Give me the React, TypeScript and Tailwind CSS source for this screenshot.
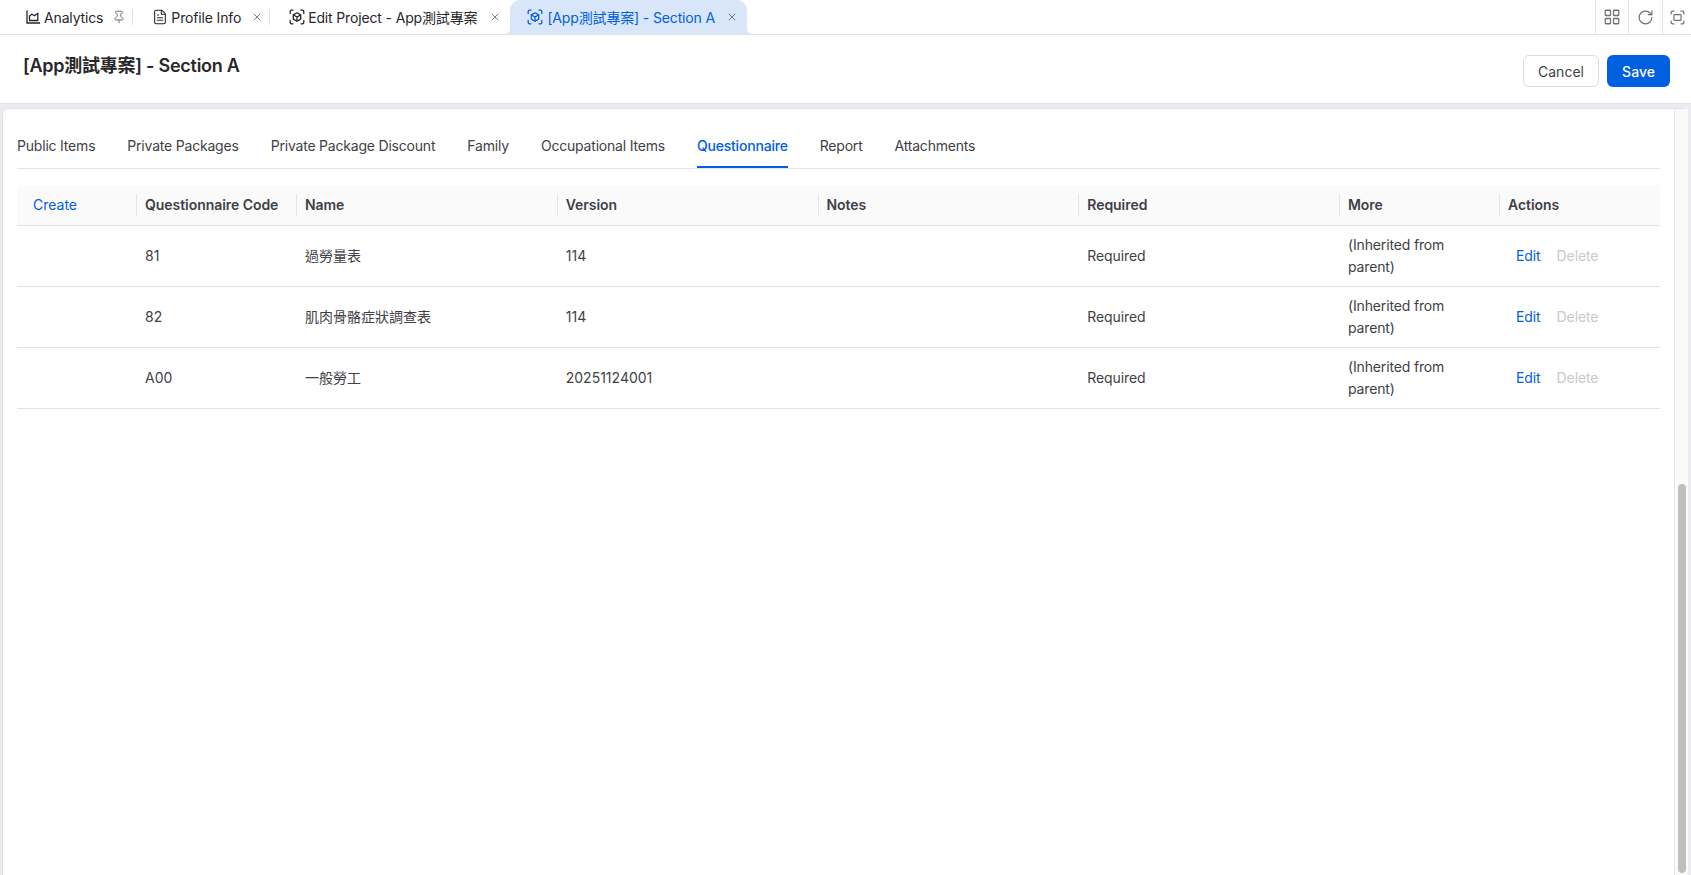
import { FileText, Fullscreen, LayoutGrid, Pin, RotateCw, X } from "lucide-react";

const sections = [
  "Public Items",
  "Private Packages",
  "Private Package Discount",
  "Family",
  "Occupational Items",
  "Questionnaire",
  "Report",
  "Attachments",
];

const rows = [
  { code: "81", name: "過勞量表", version: "114" },
  { code: "82", name: "肌肉骨骼症狀調查表", version: "114" },
  { code: "A00", name: "一般勞工", version: "20251124001" },
];

const ChartIcon = () => (
  <svg width="16" height="16" viewBox="0 0 16 16" fill="none" stroke="currentColor" strokeWidth="1.3" className="mr-[3px]">
    <path d="M2 1.5V14H15" />
    <path d="M4.5 11.5V7L7 5.2L9.5 6.8L12.8 4.2V11.5Z" strokeLinejoin="round" />
  </svg>
);

const ProjectIcon = ({ className }: { className: string }) => (
  <svg width="16" height="16" viewBox="0 0 16 16" fill="none" stroke="currentColor" strokeWidth="1.3" strokeLinecap="round" strokeLinejoin="round" className={className}>
    <path d="M1.2 4.5V2.6C1.2 1.8 1.8 1.2 2.6 1.2H4" />
    <path d="M12 1.2H13.4C14.2 1.2 14.8 1.8 14.8 2.6V4.5" />
    <path d="M14.8 11.5V13.4C14.8 14.2 14.2 14.8 13.4 14.8H12" />
    <path d="M4 14.8H2.6C1.8 14.8 1.2 14.2 1.2 13.4V11.5" />
    <path d="M8 3.8L11.7 5.9V10.1L8 12.2L4.3 10.1V5.9Z" />
    <path d="M4.5 6L8 8L11.5 6M8 8V12" />
  </svg>
);

const HeadCell = ({ label }: { label: string }) => (
  <th className="relative px-2 py-[9px] text-left text-[14px] leading-[22px] font-semibold tracking-[-0.05px] text-[#3f3f46]">
    <span className="absolute left-[-1px] top-[9px] h-[22px] w-px bg-[#e5e5e5]" />
    {label}
  </th>
);

const App = () => {
  return (
    <div className="flex h-[875px] w-full flex-col overflow-hidden bg-[#ebebf2] font-['Inter','Noto_Sans_CJK_TC',sans-serif] text-[14px] text-[#3f3f46]">
      {/* tabs */}
      <div className="flex h-[35px] shrink-0 items-stretch border-b border-[#e2e2e6] bg-white pl-[25px] tracking-[-0.15px] text-[#27272a]">
        <div className="flex items-center">
          <ChartIcon />
          <span>Analytics</span>
          <Pin size={14} strokeWidth={1.7} className="ml-[9px] text-[#71717a]" />
          <span className="ml-[6px] h-4 w-px bg-[#e2e2e6]" />
        </div>
        <div className="ml-[19px] flex items-center">
          <FileText size={16} strokeWidth={1.6} className="mr-[3px]" />
          <span>Profile Info</span>
          <X size={12} strokeWidth={1.5} className="ml-[10px] text-[#52525b]" />
          <span className="ml-[6px] h-4 w-px bg-[#e2e2e6]" />
        </div>
        <div className="ml-[19px] flex items-center">
          <ProjectIcon className="mr-[3px]" />
          <span>Edit Project - App測試專案</span>
          <X size={12} strokeWidth={1.5} className="ml-[12px] text-[#52525b]" />
        </div>
        <div className="relative ml-[9px] flex w-[237px] items-center rounded-t-[10px] bg-[#d9e6f9] pl-[17px] text-[#0060df]">
          <span className="absolute bottom-0 left-[-5px] size-[5px] bg-[#d9e6f9]">
            <span className="block size-full rounded-br-[5px] bg-white" />
          </span>
          <span className="absolute bottom-0 right-[-5px] size-[5px] bg-[#d9e6f9]">
            <span className="block size-full rounded-bl-[5px] bg-white" />
          </span>
          <ProjectIcon className="mr-1" />
          <span>[App測試專案] - Section A</span>
          <X size={12} strokeWidth={1.5} className="ml-[11px] text-[#52525b]" />
        </div>
        <div className="ml-auto flex items-stretch text-[#71717a]">
          <div className="flex w-[33px] items-center justify-center border-l border-[#e2e2e6]">
            <LayoutGrid size={18} strokeWidth={1.7} />
          </div>
          <div className="flex w-[34px] items-center justify-center border-l border-[#e2e2e6]">
            <RotateCw size={17} strokeWidth={1.7} />
          </div>
          <div className="flex w-[29px] items-center justify-center border-l border-[#e2e2e6]">
            <Fullscreen size={17} strokeWidth={1.7} />
          </div>
        </div>
      </div>

      {/* title bar */}
      <div className="flex h-[69px] shrink-0 items-start justify-between border-b border-[#e2e2e6] bg-white pl-[23px] pr-[21px]">
        <h1 className="mt-[19px] text-[18px] leading-6 font-semibold tracking-[-0.25px] text-[#27272a]">
          [App測試專案] - Section A
        </h1>
        <div className="mt-5 flex gap-2">
          <button className="h-8 w-[76px] rounded-md border border-[#dcdcdc] bg-white text-[#3f3f46]">
            Cancel
          </button>
          <button className="h-8 w-[63px] rounded-md bg-[#0060df] font-medium text-white">
            Save
          </button>
        </div>
      </div>

      {/* content */}
      <div className="mt-1 mr-[3px] ml-[2px] flex min-h-0 flex-1 rounded-t-md border-t border-l border-[#e2e2e6] bg-white">
        <div className="min-w-0 flex-1 pl-[14px] pr-[14px]">
          <div className="flex h-[60px] items-end gap-8 border-b border-[#e5e5e5] tracking-[-0.2px]">
            {sections.map((s) =>
              s === "Questionnaire" ? (
                <div
                  key={s}
                  className="h-[38px] border-b-2 border-[#0060df] font-medium text-[#0060df] leading-[32px]"
                >
                  {s}
                </div>
              ) : (
                <div key={s} className="h-[38px] leading-[32px] text-[#3f3f46]">
                  {s}
                </div>
              ),
            )}
          </div>

          <table className="mt-4 w-full table-fixed border-collapse">
            <colgroup>
              <col className="w-[120px]" />
              <col className="w-[160px]" />
              <col />
              <col />
              <col />
              <col />
              <col className="w-[160px]" />
              <col className="w-[160px]" />
            </colgroup>
            <thead>
              <tr className="border-b border-[#e2e2e2] bg-[#fafafa]">
                <th className="rounded-tl-lg py-[9px] pl-4 text-left text-[14px] leading-[22px] font-normal text-[#0060df]">
                  Create
                </th>
                <HeadCell label="Questionnaire Code" />
                <HeadCell label="Name" />
                <HeadCell label="Version" />
                <HeadCell label="Notes" />
                <HeadCell label="Required" />
                <HeadCell label="More" />
                <HeadCell label="Actions" />
              </tr>
            </thead>
            <tbody>
              {rows.map((r) => (
                <tr key={r.code} className="border-b border-[#e2e2e2] leading-[22px]">
                  <td className="px-2 py-2" />
                  <td className="px-2 py-2">{r.code}</td>
                  <td className="px-2 py-2">{r.name}</td>
                  <td className="px-2 py-2">{r.version}</td>
                  <td className="px-2 py-2" />
                  <td className="px-2 py-2 tracking-[-0.1px]">Required</td>
                  <td className="px-2 py-2 tracking-[-0.15px]">(Inherited from parent)</td>
                  <td className="px-2 py-2 tracking-[-0.1px]">
                    <span className="ml-2 text-[#0060df]">Edit</span>
                    <span className="ml-4 text-[#c9c9c9]">Delete</span>
                  </td>
                </tr>
              ))}
            </tbody>
          </table>
        </div>

        {/* scrollbar */}
        <div className="flex w-[14px] shrink-0 flex-col justify-end border-l border-[#e5e5e5] bg-[#fafafa] pb-[2px] pl-[3px]">
          <div className="h-[389px] w-2 rounded-full bg-[#bfbfbf]" />
        </div>
      </div>
    </div>
  );
};

export default App;
